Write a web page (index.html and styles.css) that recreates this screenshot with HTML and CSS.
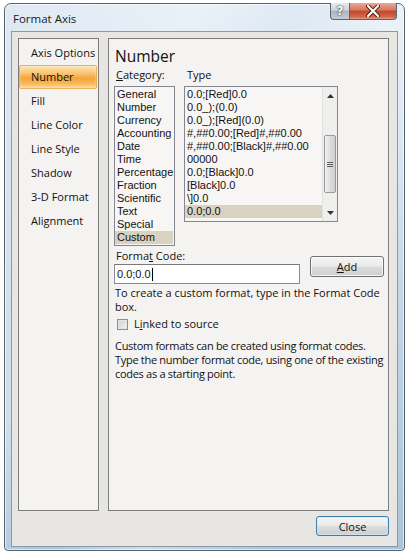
FILE: index.html
```html
<!DOCTYPE html>
<html>
<head>
<meta charset="utf-8">
<link rel="stylesheet" href="styles.css">
</head>
<body>
<div class="window">
  <div class="titlebar">
    <div class="title">Format Axis</div>
    <div class="caption-buttons">
      <div class="cap-btn help">?</div>
      <div class="cap-btn close-x">
        <svg width="14" height="12" viewBox="0 0 14 12"><path d="M2 1 L12 11 M12 1 L2 11" stroke="#4a1a10" stroke-width="4" stroke-linecap="round"/><path d="M2 1 L12 11 M12 1 L2 11" stroke="#ffffff" stroke-width="2.2" stroke-linecap="round"/></svg>
      </div>
    </div>
  </div>
  <div class="client">
    <div class="main">
      <div class="nav">
        <div class="nav-item">Axis Options</div>
        <div class="nav-item active">Number</div>
        <div class="nav-item">Fill</div>
        <div class="nav-item">Line Color</div>
        <div class="nav-item">Line Style</div>
        <div class="nav-item">Shadow</div>
        <div class="nav-item">3-D Format</div>
        <div class="nav-item">Alignment</div>
      </div>
      <div class="panel">
        <div class="heading">Number</div>
        <div class="labels">
          <div class="lbl cat-lbl"><u>C</u>ategory:</div>
          <div class="lbl">Type</div>
        </div>
        <div class="lists">
          <div class="listbox cat">
            <div class="li">General</div>
            <div class="li">Number</div>
            <div class="li">Currency</div>
            <div class="li">Accounting</div>
            <div class="li">Date</div>
            <div class="li">Time</div>
            <div class="li">Percentage</div>
            <div class="li">Fraction</div>
            <div class="li">Scientific</div>
            <div class="li">Text</div>
            <div class="li">Special</div>
            <div class="li sel">Custom</div>
          </div>
          <div class="listbox type">
            <div class="type-items">
              <div class="li">0.0;[Red]0.0</div>
              <div class="li">0.0_);(0.0)</div>
              <div class="li">0.0_);[Red](0.0)</div>
              <div class="li">#,##0.00;[Red]#,##0.00</div>
              <div class="li">#,##0.00;[Black]#,##0.00</div>
              <div class="li">00000</div>
              <div class="li">0.0;[Black]0.0</div>
              <div class="li">[Black]0.0</div>
              <div class="li">\]0.0</div>
              <div class="li sel">0.0;0.0</div>
            </div>
            <div class="scrollbar">
              <div class="arrow up"><svg width="7" height="4" viewBox="0 0 7 4"><path d="M0 4 L3.5 0 L7 4 Z" fill="#333"/></svg></div>
              <div class="track">
                <div class="thumb"><span class="grip"></span><span class="grip"></span><span class="grip"></span></div>
              </div>
              <div class="arrow down"><svg width="7" height="4" viewBox="0 0 7 4"><path d="M0 0 L3.5 4 L7 0 Z" fill="#333"/></svg></div>
            </div>
          </div>
        </div>
        <div class="lbl fc-lbl">Forma<u>t</u> Code:</div>
        <div class="fc-row">
          <div class="input">0.0;0.0<span class="caret"></span></div>
          <div class="btn add"><u>A</u>dd</div>
        </div>
        <div class="text">To create a custom format, type in the Format Code box.</div>
        <div class="check-row">
          <span class="checkbox"></span>
          <span class="lbl">L<u>i</u>nked to source</span>
        </div>
        <div class="text desc">Custom formats can be created using format codes. Type the number format code, using one of the existing codes as a starting point.</div>
      </div>
    </div>
    <div class="footer">
      <div class="btn close-btn">Close</div>
    </div>
  </div>
</div>
</body>
</html>
```

FILE: styles.css
```css
html, body {
  margin: 0;
  padding: 0;
  background: #ffffff;
}
body {
  width: 408px;
  height: 556px;
  overflow: hidden;
  font-family: "Open Sans", "Noto Sans", sans-serif;
}
.window {
  box-sizing: border-box;
  margin: 3px 0 0 4px;
  width: 401px;
  height: 548px;
  border: 1px solid #55636f;
  border-radius: 7px 7px 4px 4px;
  background:
    linear-gradient(115deg, rgba(255,255,255,0) 0%, rgba(255,255,255,0.35) 30%, rgba(255,255,255,0) 45%, rgba(255,255,255,0.4) 60%, rgba(255,255,255,0) 80%),
    linear-gradient(to bottom, #dfeaf4 0%, #cddcea 40%, #a9c4dc 100%);
  display: flex;
  flex-direction: column;
  box-shadow: inset 0 0 0 1px rgba(255,255,255,0.6);
}
.titlebar {
  height: 27px;
  display: flex;
  justify-content: space-between;
  align-items: flex-start;
}
.title {
  font-size: 11.5px;
  color: #1b1b1b;
  padding: 7px 0 0 8px;
  line-height: 16px;
}
.caption-buttons {
  display: flex;
  margin-top: -1px;
  margin-right: 7px;
}
.cap-btn {
  height: 17px;
  box-sizing: border-box;
  border: 1px solid #5b6570;
  border-top: none;
  display: flex;
  align-items: center;
  justify-content: center;
}
.help {
  width: 19px;
  border-radius: 0 0 0 4px;
  border-right: none;
  background: linear-gradient(to bottom, #e4e9ee 0%, #cfd6de 45%, #aab5c1 50%, #c3ccd5 100%);
  color: #ffffff;
  font-family: "DejaVu Sans", sans-serif;
  font-weight: bold;
  font-size: 12px;
  text-shadow: 0 0 2px #333, 0 0 1px #333;
}
.close-x {
  width: 48px;
  border-radius: 0 0 4px 0;
  background: linear-gradient(to bottom, #e9a89a 0%, #d7765f 45%, #c4452b 50%, #d2664b 85%, #e19a80 100%);
}
.client {
  flex: 1;
  margin: 0 6px 3px 6px;
  border: 1px solid #8a9aa8;
  background: #e8e6e3;
  display: flex;
  flex-direction: column;
  padding: 6px 7px 0 6px;
}
.main {
  display: flex;
  gap: 9px;
  height: 473px;
}
.nav {
  width: 81px;
  box-sizing: border-box;
  border: 1px solid #7d7d7d;
  background: #f5f3f1;
  padding: 2px 1px 0 0;
}
.nav-item {
  height: 24px;
  line-height: 24px;
  font-size: 11px;
  color: #111;
  padding-left: 12px;
  box-sizing: border-box;
  border-radius: 2px;
}
.nav-item.active {
  border: 1px solid #e8b05a;
  line-height: 22px;
  padding-left: 11px;
  background: linear-gradient(to bottom, #fde6b4 0%, #f9c271 35%, #f6a43a 55%, #f8b85a 80%, #fcd9a0 100%);
  box-shadow: inset 0 0 2px rgba(255,255,255,0.7);
}
.panel {
  width: 281px;
  box-sizing: border-box;
  border: 1px solid #7d7d7d;
  background: #f5f3f1;
  padding: 7px 1px 0 5px;
  color: #111;
}
.heading {
  font-size: 15.5px;
  line-height: 20px;
  padding-left: 1px;
}
.labels {
  display: flex;
  height: 17px;
  align-items: center;
}
.lbl {
  font-size: 11px;
  line-height: 14px;
}
.cat-lbl {
  width: 71px;
  padding-left: 2px;
}
.lists {
  display: flex;
  align-items: flex-start;
  gap: 9px;
  margin-top: 3px;
}
.listbox {
  box-sizing: border-box;
  border: 1px solid #828790;
  background: #f7f6f4;
  font-family: "Liberation Sans", Arial, sans-serif;
  font-size: 11px;
}
.li {
  height: 13px;
  line-height: 13px;
  white-space: nowrap;
  padding-left: 2px;
}
.li.sel {
  background: #d8d2be;
}
.cat {
  width: 61px;
  height: 160px;
  padding: 1px 1px 0 0;
}
.type {
  width: 154px;
  height: 136px;
  display: flex;
}
.type-items {
  flex: 1;
  padding-top: 1px;
  overflow: hidden;
}
.scrollbar {
  width: 14px;
  display: flex;
  flex-direction: column;
  background: #efefee;
  border-left: 1px solid #e2e2e2;
}
.arrow {
  height: 17px;
  display: flex;
  align-items: center;
  justify-content: center;
}
.track {
  flex: 1;
  padding-top: 31px;
}
.thumb {
  box-sizing: border-box;
  height: 58px;
  margin: 0 1px;
  border: 1px solid #9a9a9a;
  border-radius: 2px;
  background: linear-gradient(to right, #f2f2f2, #dcdcdc 50%, #cfcfcf);
  display: flex;
  flex-direction: column;
  align-items: center;
  justify-content: center;
  gap: 1px;
}
.grip {
  width: 6px;
  height: 1px;
  background: #5f5f5f;
}
.fc-lbl {
  margin-top: 3px;
  padding-left: 2px;
  height: 14px;
}
.fc-row {
  display: flex;
  align-items: flex-start;
  margin-top: -7px;
}
.input {
  box-sizing: border-box;
  width: 186px;
  height: 20px;
  margin-top: 8px;
  border: 1px solid #8c8c8c;
  border-top-color: #7a7a7a;
  background: #ffffff;
  font-family: "Liberation Sans", Arial, sans-serif;
  font-size: 11px;
  line-height: 18px;
  padding-left: 2px;
  display: flex;
  align-items: center;
}
.caret {
  display: inline-block;
  width: 1px;
  height: 13px;
  background: #000;
  margin-left: 1px;
}
.btn {
  box-sizing: border-box;
  border: 1px solid #707070;
  border-radius: 3px;
  font-size: 11px;
  color: #111;
  display: flex;
  align-items: center;
  justify-content: center;
  background: linear-gradient(to bottom, #f4f4f4 0%, #ebebeb 48%, #dcdcdc 52%, #cfcfcf 100%);
  box-shadow: inset 0 0 0 1px rgba(255,255,255,0.75);
}
.add {
  width: 74px;
  height: 21px;
  margin-left: 10px;
}
.text {
  font-size: 11px;
  line-height: 14px;
  margin-top: 2px;
  padding-left: 1px;
  padding-right: 7px;
}
.check-row {
  display: flex;
  align-items: center;
  gap: 6px;
  margin-top: 3px;
  padding-left: 3px;
  height: 14px;
}
.checkbox {
  box-sizing: border-box;
  width: 11px;
  height: 11px;
  border: 1px solid #8e8f8f;
  background: linear-gradient(135deg, #cfd0d0, #f4f4f4);
  box-shadow: inset 0 0 0 1px #e6e6e6;
}
.desc {
  margin-top: 8px;
  padding-right: 0;
  letter-spacing: -0.3px;
}
.footer {
  display: flex;
  justify-content: flex-end;
  padding-top: 5px;
  padding-right: 1px;
}
.close-btn {
  width: 73px;
  height: 20px;
  border-color: #3c7fb1;
  box-shadow: inset 0 0 0 1px rgba(200,235,255,0.7);
}
```
